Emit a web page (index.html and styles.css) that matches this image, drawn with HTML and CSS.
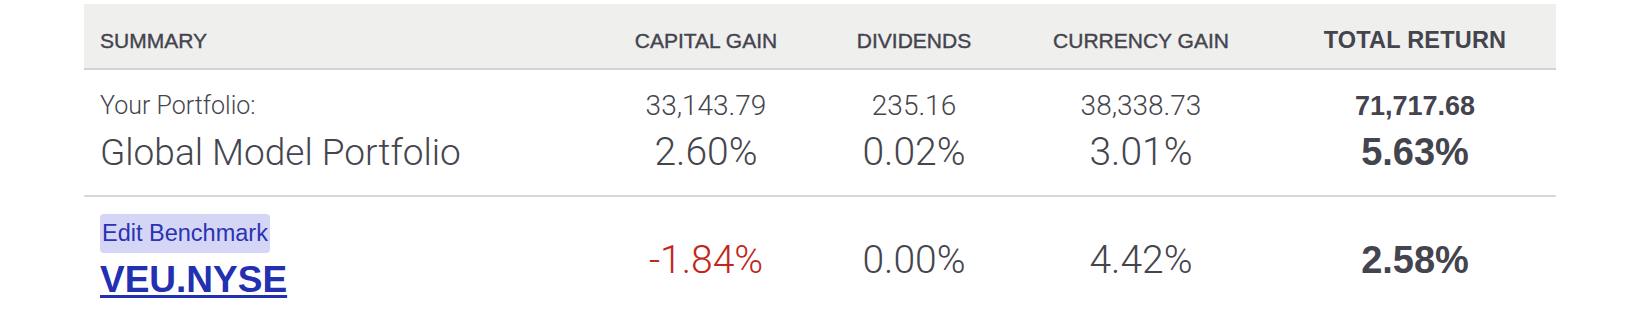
FILE: index.html
```html
<!DOCTYPE html>
<html lang="en">
<head>
<meta charset="utf-8">
<title>Summary</title>
<link rel="stylesheet" href="styles.css">
</head>
<body>
<div class="summary">
  <div class="row head">
    <div class="cell first">SUMMARY</div>
    <div class="cell">CAPITAL GAIN</div>
    <div class="cell">DIVIDENDS</div>
    <div class="cell">CURRENCY GAIN</div>
    <div class="cell total">TOTAL RETURN</div>
  </div>
  <div class="row portfolio">
    <div class="cell first">
      <div class="small">Your Portfolio:</div>
      <div class="big">Global Model Portfolio</div>
    </div>
    <div class="cell">
      <div class="small">33,143.79</div>
      <div class="big">2.60%</div>
    </div>
    <div class="cell">
      <div class="small">235.16</div>
      <div class="big">0.02%</div>
    </div>
    <div class="cell">
      <div class="small">38,338.73</div>
      <div class="big">3.01%</div>
    </div>
    <div class="cell total">
      <div class="small">71,717.68</div>
      <div class="big">5.63%</div>
    </div>
  </div>
  <div class="row bench">
    <div class="cell first">
      <span class="edit">Edit Benchmark</span>
      <a class="ticker" href="#">VEU.NYSE</a>
    </div>
    <div class="cell value negative">-1.84%</div>
    <div class="cell value">0.00%</div>
    <div class="cell value">4.42%</div>
    <div class="cell value total">2.58%</div>
  </div>
</div>
</body>
</html>
```
FILE: styles.css
```css
html, body {
  margin: 0;
  padding: 0;
  background: #ffffff;
}

body {
  font-family: "Liberation Sans", Arial, sans-serif;
  color: #4b4b54;
}

.summary {
  width: 1472px;
  margin: 4px 0 0 84px;
}

.row {
  display: grid;
  grid-template-columns: 508px 228px 188px 266px 282px;
}

.cell {
  text-align: center;
}

.cell.first {
  text-align: left;
  padding-left: 16px;
}

/* header */
.head {
  background: #efefed;
  border-bottom: 2px solid #d3d3cf;
  height: 64px;
  box-sizing: content-box;
}

.head .cell {
  font-size: 21px;
  line-height: 24px;
  padding-top: 25px;
  color: #44444e;
  -webkit-text-stroke: 0.4px #44444e;
}

.head .cell.total {
  font-size: 23.5px;
  font-weight: bold;
  letter-spacing: 0.2px;
  -webkit-text-stroke: 0;
  padding-top: 24px;
}

/* portfolio row */
.portfolio {
  border-bottom: 2px solid #d8d8dc;
}

.portfolio .cell {
  padding-top: 21px;
  padding-bottom: 20px;
}

.small,
.big,
.value {
  font-family: Roboto, "Liberation Sans", Arial, sans-serif;
  font-weight: 300;
}

.small {
  font-size: 25px;
  line-height: 30px;
  color: #45454e;
}

.cell:not(.first) .small {
  font-size: 28px;
}

.big {
  font-size: 37px;
  line-height: 44px;
  margin-top: 10px;
  color: #45454e;
}

.cell:not(.first) .big {
  font-size: 39px;
  margin-top: 9px;
}

.total .small,
.total .big {
  font-family: "Liberation Sans", Arial, sans-serif;
  font-weight: bold;
  color: #44444e;
}

.cell.total .small {
  font-size: 27px;
}

.cell.total .big {
  font-size: 38px;
}

/* benchmark row */
.bench .cell.first {
  padding-top: 17px;
  display: flex;
  flex-direction: column;
  align-items: flex-start;
}

.edit {
  display: inline-block;
  font-size: 23.5px;
  line-height: 39px;
  height: 39px;
  padding: 0 2px;
  background: #d5d6f6;
  color: #2a33b3;
  border-radius: 4px;
}

.ticker {
  margin-top: 7px;
  font-size: 37px;
  line-height: 40px;
  font-weight: bold;
  color: #2330b2;
  text-decoration: underline;
  text-decoration-thickness: 3px;
  text-underline-offset: 3px;
}

.value {
  padding-top: 41px;
  font-size: 39px;
  line-height: 44px;
  color: #45454e;
}

.value.negative {
  color: #c32620;
}

.value.total {
  font-family: "Liberation Sans", Arial, sans-serif;
  font-weight: bold;
  font-size: 38px;
  color: #44444e;
}
```
